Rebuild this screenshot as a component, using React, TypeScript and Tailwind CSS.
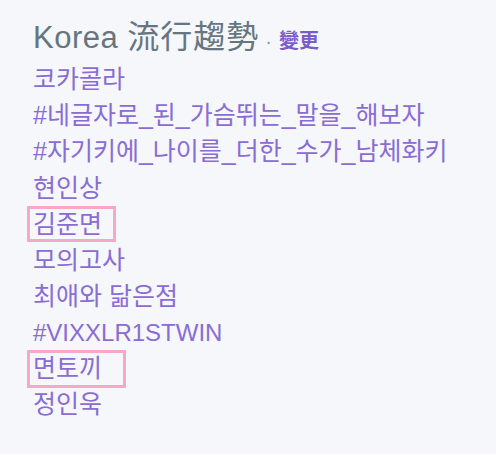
import React from "react";

const items: { text: string; box?: string; latin?: boolean }[] = [
  { text: "코카콜라" },
  { text: "#네글자로_된_가슴뛰는_말을_해보자" },
  { text: "#자기키에_나이를_더한_수가_남체화키" },
  { text: "현인상" },
  { text: "김준면", box: "w-[89px] h-[36px]" },
  { text: "모의고사" },
  { text: "최애와 닮은점" },
  { text: "#VIXXLR1STWIN", latin: true },
  { text: "면토끼", box: "w-[99px] h-[38px]" },
  { text: "정인욱" },
];

export default function App() {
  return (
    <div
      className="w-[496px] h-[454px] bg-[#f5f7fa] pl-[33px] pt-[21px] overflow-hidden"
      style={{ fontFamily: '"Liberation Sans", "Noto Sans CJK KR", sans-serif' }}
    >
      <div className="flex items-baseline h-[41px] leading-none">
        <span className="text-[31px] tracking-[0.5px] text-[#66757f]">Korea</span>
        <span className="text-[32px] tracking-[1px] text-[#66757f] ml-[9px]">流行趨勢</span>
        <span className="text-[#8899a6] text-[20px] ml-[6px] mr-[7px]">·</span>
        <span className="text-[20px] font-bold text-[#7b5ccc]">變更</span>
      </div>
      <ul>
        {items.map((it) => {
          const size = it.latin ? "text-[24px]" : "text-[25px]";
          return (
            <li key={it.text} className="h-[36.1px] flex items-center">
              {it.box ? (
                <span
                  className={`${it.box} ${size} -ml-[6px] pl-[3px] border-[3px] border-[#f6a9c6] flex items-center text-[#8a6cd4] whitespace-nowrap`}
                >
                  {it.text}
                </span>
              ) : (
                <span className={`${size} text-[#8a6cd4] whitespace-nowrap`}>{it.text}</span>
              )}
            </li>
          );
        })}
      </ul>
    </div>
  );
}
